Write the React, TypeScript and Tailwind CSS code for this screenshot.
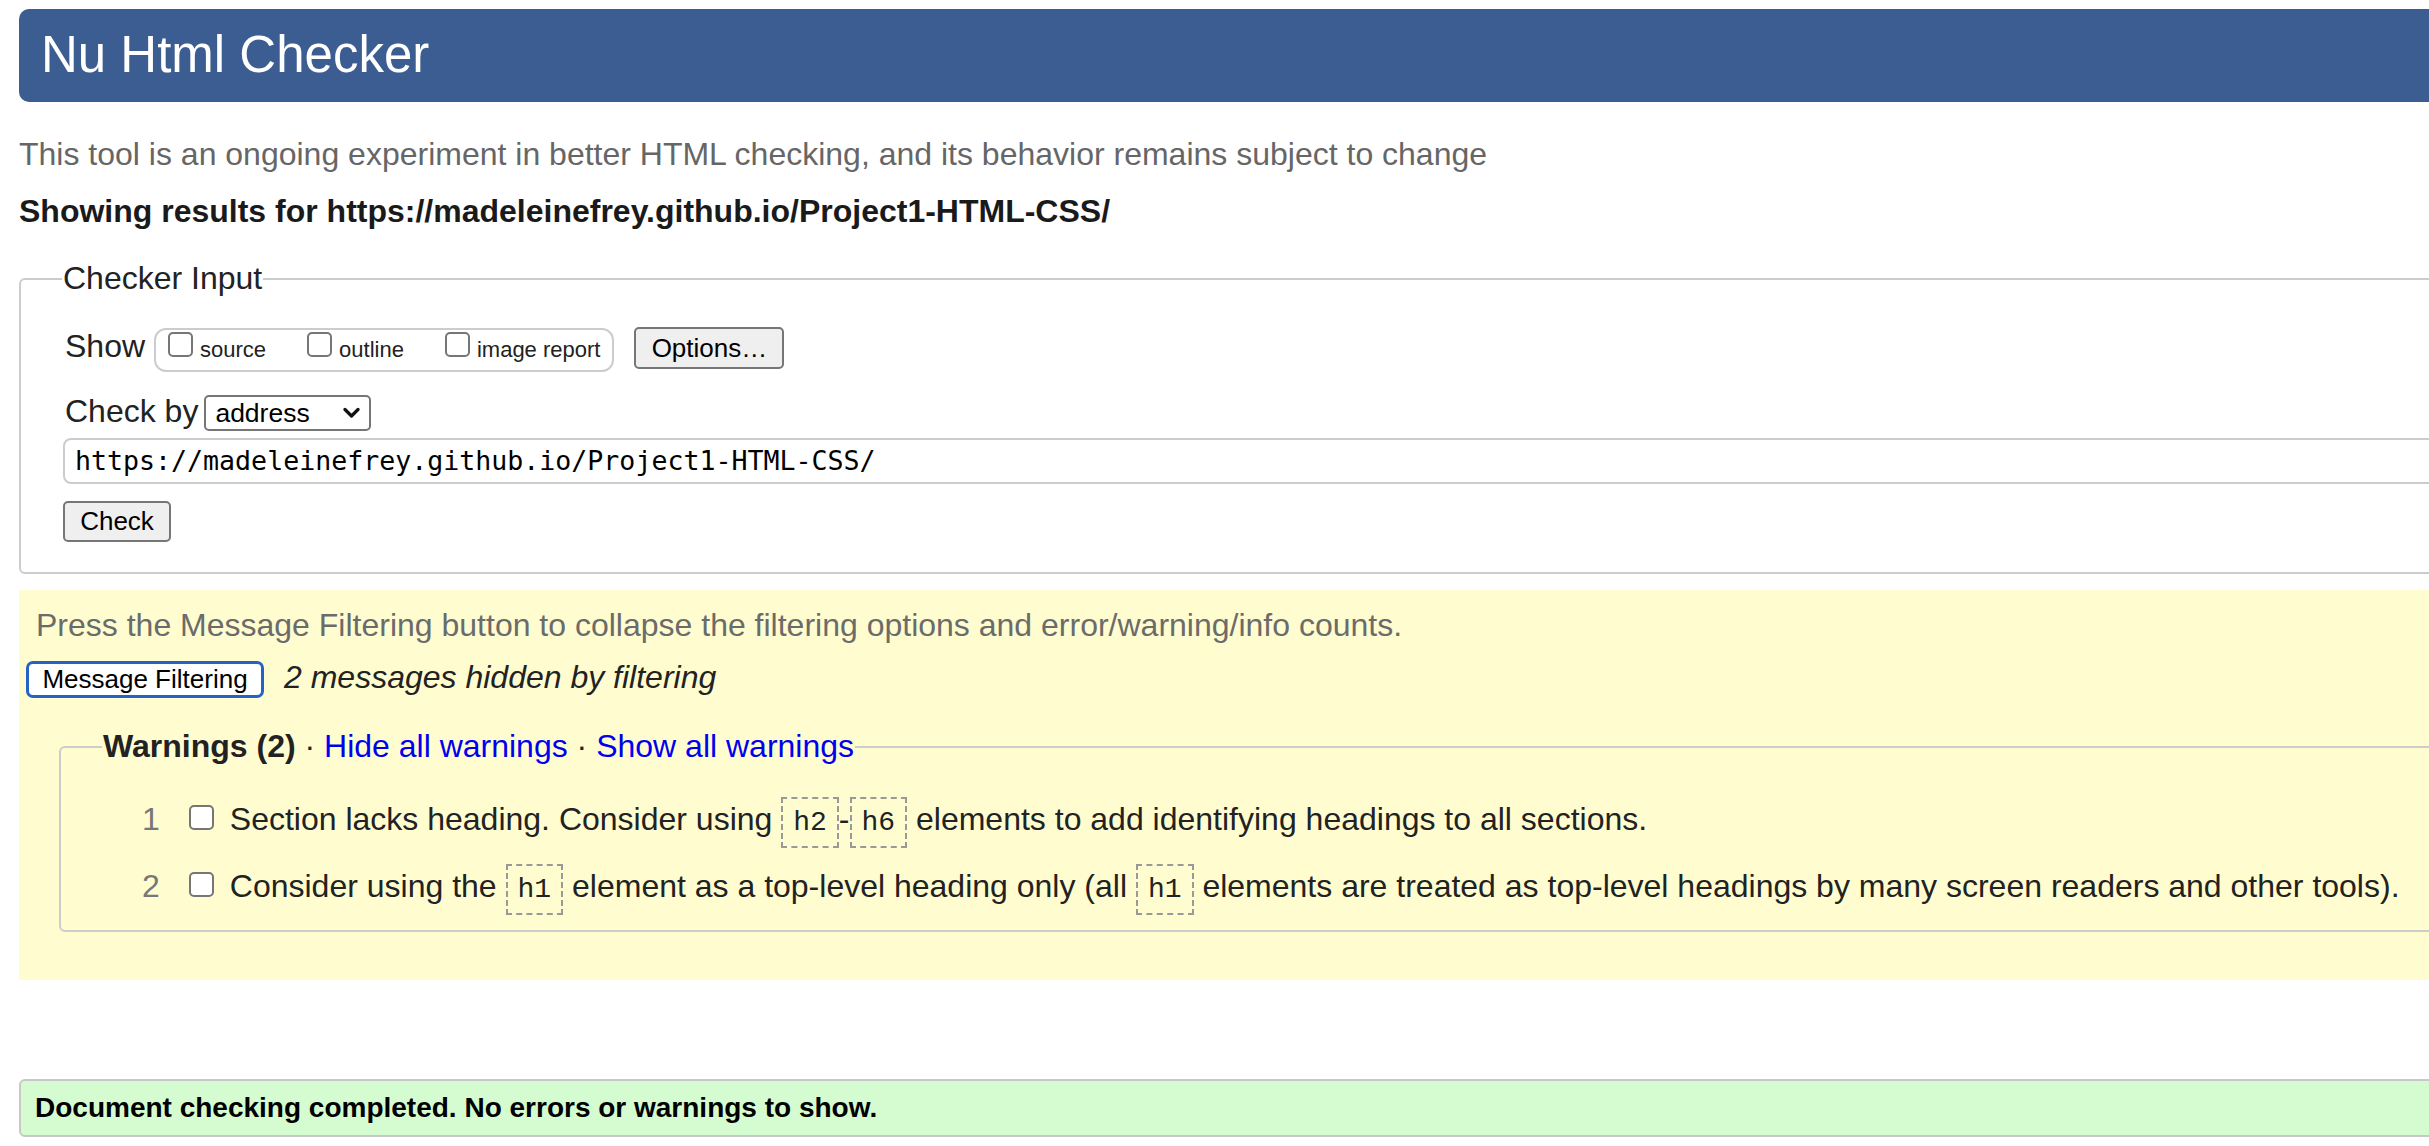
function Checkbox() {
  return <span className="inline-block h-[25px] w-[25px] shrink-0 rounded-[5px] border-2 border-[#767676] bg-white" />
}

function Code({ children }: { children: string }) {
  return (
    <code className="border-2 border-dashed border-[#999] px-[10px] py-[8px] font-['Liberation_Mono',monospace] text-[28px] leading-none text-[#222]">
      {children}
    </code>
  )
}

export default function App() {
  return (
    <div className="h-[1146px] w-full overflow-hidden bg-white font-['Liberation_Sans',Arial,sans-serif] text-[#222]">
      <div className="w-[2700px] pl-[19px] pt-[9px]">
        {/* Header */}
        <h1 className="flex h-[93px] items-center rounded-[10px] bg-[#3c5d91] pl-[22px] text-[51px] text-white">
          Nu Html Checker
        </h1>

        <p className="mt-[34px] text-[32px] leading-[37px] text-[#666]">
          This tool is an ongoing experiment in better HTML checking, and its behavior remains subject to change
        </p>
        <p className="mt-[20px] text-[32px] font-bold leading-[37px] text-[#1a1a1a]">
          Showing results for https://madeleinefrey.github.io/Project1-HTML-CSS/
        </p>

        {/* Checker Input */}
        <fieldset className="mt-[30px] rounded-[6px] border-2 border-[#ccc] pb-[30px] pl-[42px]">
          <legend className="-ml-[1px] px-[1px] text-[32px] leading-[37px]">Checker Input</legend>

          <div className="mt-[30px] flex items-baseline">
            <span className="ml-[2px] text-[32px] leading-[37px]">Show</span>
            <div className="ml-[9px] flex items-baseline rounded-[12px] border-2 border-[#ccc] pb-[6px] pl-[12px] pr-[12px] pt-[2px]">
              <Checkbox />
              <span className="ml-[7px] text-[22px] leading-[22px]">source</span>
              <span className="ml-[41px]">
                <Checkbox />
              </span>
              <span className="ml-[7px] text-[22px] leading-[22px]">outline</span>
              <span className="ml-[41px]">
                <Checkbox />
              </span>
              <span className="ml-[7px] text-[22px] leading-[22px]">image report</span>
            </div>
            <button className="ml-[20px] flex h-[42px] w-[150px] items-center justify-center rounded-[5px] border-2 border-[#767676] bg-[#efefef] text-[26px] text-black">
              Options…
            </button>
          </div>

          <div className="mt-[21px] flex items-baseline">
            <span className="ml-[2px] text-[32px] leading-[37px]">Check by</span>
            <div className="ml-[6px] flex h-[36px] w-[167px] items-center justify-between rounded-[5px] border-2 border-[#767676] bg-white pl-[9px] pr-[9px] text-[26.5px] text-black">
              <span>address</span>
              <svg width="17" height="12" viewBox="0 0 17 12" fill="none">
                <polyline points="2,2.5 8.5,9 15,2.5" stroke="#111" strokeWidth="3.2" strokeLinecap="round" strokeLinejoin="round" />
              </svg>
            </div>
          </div>

          <div className="mt-[7px] flex h-[46px] items-center rounded-[8px] border-2 border-[#ccc] pl-[10px] font-['DejaVu_Sans_Mono',monospace] text-[26.6px] text-black">
            https://madeleinefrey.github.io/Project1-HTML-CSS/
          </div>

          <button className="mt-[17px] flex h-[41px] w-[108px] items-center justify-center rounded-[5px] border-2 border-[#767676] bg-[#efefef] text-[26px] text-black">
            Check
          </button>
        </fieldset>

        {/* Messages */}
        <div className="mt-[16px] bg-[#fffdd0] pb-[48px] pl-[7px] pt-[17px]">
          <p className="ml-[10px] text-[32px] leading-[37px] text-[#6b6b6b]">
            Press the Message Filtering button to collapse the filtering options and error/warning/info counts.
          </p>
          <div className="mt-[15px] flex items-baseline">
            <button className="flex h-[37px] w-[238px] items-center justify-center rounded-[7px] border-[3px] border-[#2462c8] bg-white text-[26px] text-black">
              Message Filtering
            </button>
            <span className="ml-[20px] text-[32px] italic leading-[37px]">2 messages hidden by filtering</span>
          </div>

          <fieldset className="ml-[33px] mt-[30px] rounded-[6px] border-2 border-[#ccc] pb-[25px] pl-[41px]">
            <legend className="px-[1px] text-[32px] leading-[37px]">
              <span className="font-bold">Warnings (2)</span>
              <span> · </span>
              <span className="text-[#0000ee]">Hide all warnings</span>
              <span> · </span>
              <span className="text-[#0000ee]">Show all warnings</span>
            </legend>

            <div className="mt-[36px] flex items-baseline">
              <span className="ml-[40px] text-[32px] leading-[37px] text-[#777]">1</span>
              <span className="ml-[29px]">
                <Checkbox />
              </span>
              <span className="ml-[16px] text-[32px] leading-[37px]">
                Section lacks heading. Consider using <Code>h2</Code>-<Code>h6</Code> elements to add identifying
                headings to all sections.
              </span>
            </div>

            <div className="mt-[30px] flex items-baseline">
              <span className="ml-[40px] text-[32px] leading-[37px] text-[#777]">2</span>
              <span className="ml-[29px]">
                <Checkbox />
              </span>
              <span className="ml-[16px] text-[32px] leading-[37px]">
                Consider using the <Code>h1</Code> element as a top-level heading only (all <Code>h1</Code> elements
                are treated as top-level headings by many screen readers and other tools).
              </span>
            </div>
          </fieldset>
        </div>

        {/* Result */}
        <div className="mt-[99px] flex h-[58px] items-center rounded-[6px] border-2 border-[#c8c8c8] bg-[#d5fbd0] pl-[14px] text-[28px] font-bold text-black">
          Document checking completed. No errors or warnings to show.
        </div>
      </div>
    </div>
  )
}
